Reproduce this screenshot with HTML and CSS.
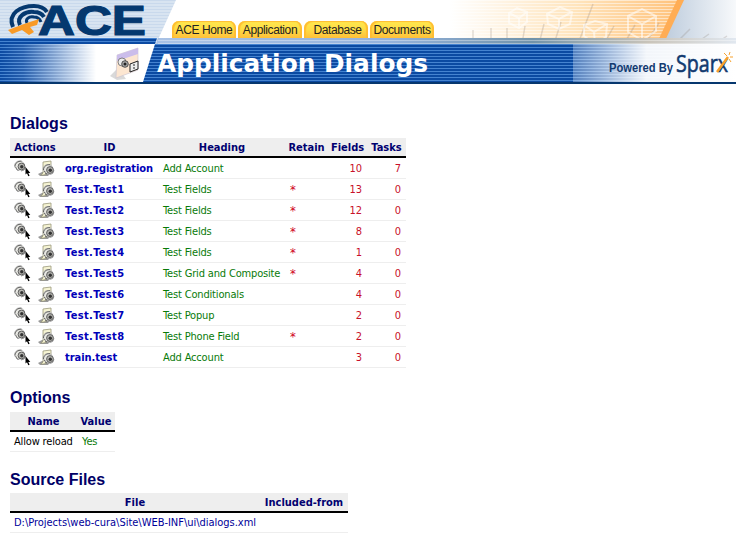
FILE: index.html
```
<!DOCTYPE html>
<html lang="en">
<head>
<meta charset="utf-8">
<title>Application Dialogs</title>
<link rel="stylesheet" href="styles.css">
</head>
<body>
<svg class="sprites" width="0" height="0" aria-hidden="true">
  <defs>
    <g id="eye">
      <ellipse cx="5.5" cy="5.5" rx="4.8" ry="4.6" fill="#e8e8e3" stroke="#aaa" stroke-width=".8"/>
      <path d="M1 6.5C1 3 4 1 7.500 1.200M3 8.500l-1.500-1M4.500 10.500l-2-1" fill="none" stroke="#444" stroke-width=".8"/>
      <circle cx="7.5" cy="6.5" r="3.4" fill="#b5b5b0" stroke="#555" stroke-width=".9"/>
      <circle cx="7.8" cy="6.800" r="1.700" fill="#333"/>
      <path d="M7 11q4 0 4.500-4" fill="none" stroke="#777" stroke-width=".8"/>
    </g>
    <symbol id="view" viewBox="0 0 17 17">
      <use href="#eye"/>
      <path d="M11.500 7v7.500l1.500-1.200 1.300 3 1.300-.6-1.300-2.700h2z" fill="#000"/>
    </symbol>
    <symbol id="source" viewBox="0 0 17 17">
      <path d="M0 14l4-2h9l-3 4H2z" fill="#999"/>
      <path d="M5 2l8-1v11l-7 3H3l2-2z" fill="#f6f4d3" stroke="#99987a" stroke-width=".8"/>
      <use href="#eye" transform="translate(4.500 3.500)"/>
    </symbol>
  </defs>
</svg>
<header class="banner">
  <svg class="art" width="736" height="84" viewBox="0 0 736 84">
    <defs>
      <pattern id="pale" width="4" height="3" patternUnits="userSpaceOnUse"><path fill="#d8e4f1" d="M0 0h4v3H0z"/><path fill="#c9d9ec" d="M0 0h4v1H0z"/></pattern>
      <pattern id="blue" width="4" height="3" y="44" patternUnits="userSpaceOnUse"><path fill="#0b4aa2" d="M0 0h4v3H0z"/><path fill="#4583d0" d="M0 0h4v1H0z"/></pattern>
      <pattern id="lines" width="4" height="3" patternUnits="userSpaceOnUse"><path fill="#fff" fill-opacity=".5" d="M0 0h4v1H0z"/></pattern>
      <linearGradient id="fadeIcon"><stop offset="0" stop-color="#fff" stop-opacity="0"/><stop offset=".15" stop-color="#fff" stop-opacity=".12"/><stop offset=".62" stop-color="#fff"/></linearGradient>
      <linearGradient id="fadePower"><stop offset="0" stop-color="#fff" stop-opacity=".3"/><stop offset=".45" stop-color="#fff" stop-opacity=".95"/><stop offset="1" stop-color="#fff"/></linearGradient>
      <linearGradient id="orange"><stop offset="0" stop-color="#fff"/><stop offset=".55" stop-color="#ffe4bc"/><stop offset="1" stop-color="#ffc27b"/></linearGradient>
      <linearGradient id="steel"><stop offset="0" stop-color="#bccbdc"/><stop offset="1" stop-color="#f7f9fb"/></linearGradient>
      <linearGradient id="edge"><stop offset="0" stop-color="#a9c2e5"/><stop offset=".4" stop-color="#94b2dc"/><stop offset=".65" stop-color="#7193aa"/><stop offset=".85" stop-color="#c9c4ba"/><stop offset="1" stop-color="#e1e8f0"/></linearGradient>
    </defs>
    <path fill="#fff" d="M0 0h736v84H0z"/>
    <path fill="url(#pale)" d="M0 0h176l-20 44H0z"/>
    <path fill="url(#orange)" d="M450 0h230v44H450z"/>
    <path fill="url(#lines)" d="M450 0h230v44H450z"/>
    <path fill="url(#steel)" d="M680 0h56v44h-74z"/>
    <path fill="#ffad55" d="M677 0h7l-20 43h-7z"/>
    <g fill="none" stroke="#8b8177" stroke-opacity=".25" stroke-width="1.500">
      <path d="M473 44V30M491 44V28M507 44V28M522 44l3-18M539 44l5-20M554 44l7-22M578 44l15-40M604 44l10-18M624 44l11-19M645 44l14-21M675 44l15-15M695 44l14-10M715 44l12-8"/>
    </g>
    <g fill="none" stroke="#fff" stroke-opacity=".55" stroke-width="2">
      <path d="M509 13l8-5 10 4v10l-8 6-10-5zM509 13l10 5 8-6M519 18v10"/>
      <path d="M547 14l13-7 12 5-2 12-11 5-11-5zM547 14l12 5 13-7M559 19v10"/>
      <path d="M584 25l11-4 12 3-1 13-11 7-11-8zM584 25l10 7 13-8M594 32l1 12"/>
      <path d="M628 16l14-7 14 7v15l-14 9-14-8zM628 16l14 8 14-8M642 24v16"/>
    </g>
    <path fill="url(#edge)" d="M158 38h578v6H156z"/>
    <path fill="#fff" fill-opacity=".35" d="M158 40h578v1H158zM158 43h578v1H158z"/>
    <path fill="url(#blue)" d="M0 38h157l-2 6v38H0z"/>
    <path fill="url(#fadeIcon)" d="M0 44h155v38H0z"/>
    <path fill="url(#blue)" d="M155 44h418v38H143z"/>
    <path fill="url(#blue)" d="M573 44h163v38H573z"/>
    <path fill="url(#fadePower)" d="M573 44h163v38H573z"/>
    <path fill="#06376e" d="M0 82h736v2H0z"/>
    <g fill="none" stroke="#04386f" stroke-width="4">
      <path d="M13 27C7 13 21 6 34 6q9 0 13 6"/>
      <path d="M20 25c-4-8 5-14 14-13q7 0 10 5"/>
      <path d="M27 23c-2-4 2-7 7-6q5 0 7 5" stroke-width="3"/>
    </g>
    <path d="M8 30l16-6 15-5-2 6-7 2 4 5-5 3-7-5-10 4z" fill="#f89a27"/>
    <text class="brand" x="38" y="35" textLength="108" lengthAdjust="spacingAndGlyphs">ACE</text>
    <path d="M110 76l8-8 8 11-9 1z" fill="#aaa" fill-opacity=".45"/>
    <path d="M117 55l21-7v22l-22 8z" fill="#fce6d1" stroke="#c7c1d0" stroke-width=".6"/>
    <path d="M117 55l21-7v6l-21 7z" fill="#cbbdeb"/>
    <circle cx="122" cy="62" r="4" fill="#eee" stroke="#555" stroke-width=".7"/>
    <circle cx="125" cy="64" r="3.300" fill="#aaa" stroke="#333" stroke-width=".8"/>
    <circle cx="125" cy="64" r="1.500" fill="#222"/>
    <path d="M130 64l8-3v8l-8 3z" fill="#eee" stroke="#222"/>
    <path d="M133 65h2M133 68h2" stroke="#222"/>
    <text class="title" x="157" y="72" textLength="271" lengthAdjust="spacingAndGlyphs">Application Dialogs</text>
    <text class="powered" x="609" y="72" textLength="64" lengthAdjust="spacingAndGlyphs">Powered By</text>
    <text class="sparx" x="676" y="72" textLength="52" lengthAdjust="spacingAndGlyphs">Sparx</text>
    <path d="M717 72l11-15" stroke="#f7a12c" stroke-width="2.500"/>
    <path d="M727 56l-3-3M729 55l1-3M730 57h3M729 59l2 3" stroke="#f7a12c"/>
  </svg>
  <nav class="tabs">
    <a>ACE Home</a><a>Application</a><a class="pad">Database</a><a>Documents</a>
  </nav>
</header>
<main>
  <h2>Dialogs</h2>
  <table class="dialogs">
    <colgroup><col class="c-act"><col class="c-id"><col class="c-head"><col class="c-ret"><col class="c-num"><col class="c-num"></colgroup>
    <thead><tr><th>Actions</th><th>ID</th><th>Heading</th><th>Retain</th><th>Fields</th><th>Tasks</th></tr></thead>
    <tbody>
      <tr><td class="act"><svg><use href="#view"/></svg><svg><use href="#source"/></svg></td><td class="id">org.registration</td><td>Add Account</td><td class="ret"></td><td class="num">10</td><td class="num">7</td></tr>
      <tr><td class="act"><svg><use href="#view"/></svg><svg><use href="#source"/></svg></td><td class="id test">Test.Test1</td><td>Test Fields</td><td class="ret">*</td><td class="num">13</td><td class="num">0</td></tr>
      <tr><td class="act"><svg><use href="#view"/></svg><svg><use href="#source"/></svg></td><td class="id test">Test.Test2</td><td>Test Fields</td><td class="ret">*</td><td class="num">12</td><td class="num">0</td></tr>
      <tr><td class="act"><svg><use href="#view"/></svg><svg><use href="#source"/></svg></td><td class="id test">Test.Test3</td><td>Test Fields</td><td class="ret">*</td><td class="num">8</td><td class="num">0</td></tr>
      <tr><td class="act"><svg><use href="#view"/></svg><svg><use href="#source"/></svg></td><td class="id test">Test.Test4</td><td>Test Fields</td><td class="ret">*</td><td class="num">1</td><td class="num">0</td></tr>
      <tr><td class="act"><svg><use href="#view"/></svg><svg><use href="#source"/></svg></td><td class="id test">Test.Test5</td><td>Test Grid and Composite</td><td class="ret">*</td><td class="num">4</td><td class="num">0</td></tr>
      <tr><td class="act"><svg><use href="#view"/></svg><svg><use href="#source"/></svg></td><td class="id test">Test.Test6</td><td>Test Conditionals</td><td class="ret"></td><td class="num">4</td><td class="num">0</td></tr>
      <tr><td class="act"><svg><use href="#view"/></svg><svg><use href="#source"/></svg></td><td class="id test">Test.Test7</td><td>Test Popup</td><td class="ret"></td><td class="num">2</td><td class="num">0</td></tr>
      <tr><td class="act"><svg><use href="#view"/></svg><svg><use href="#source"/></svg></td><td class="id test">Test.Test8</td><td>Test Phone Field</td><td class="ret">*</td><td class="num">2</td><td class="num">0</td></tr>
      <tr><td class="act"><svg><use href="#view"/></svg><svg><use href="#source"/></svg></td><td class="id">train.test</td><td>Add Account</td><td class="ret"></td><td class="num">3</td><td class="num">0</td></tr>
    </tbody>
  </table>
  <h2>Options</h2>
  <table class="options">
    <colgroup><col class="c-name"><col class="c-value"></colgroup>
    <thead><tr><th>Name</th><th>Value</th></tr></thead>
    <tbody><tr><td class="name">Allow reload</td><td class="value">Yes</td></tr></tbody>
  </table>
  <h2 class="files-title">Source Files</h2>
  <table class="files">
    <colgroup><col class="c-file"><col class="c-inc"></colgroup>
    <thead><tr><th>File</th><th>Included-from</th></tr></thead>
    <tbody><tr><td class="file">D:\Projects\web-cura\Site\WEB-INF\ui\dialogs.xml</td><td></td></tr></tbody>
  </table>
</main>
</body>
</html>
```
FILE: styles.css
```
body { margin: 0; background: #fff; font: 11px/13px "DejaVu Sans Condensed", "DejaVu Sans", sans-serif; font-stretch: condensed; overflow: hidden; }
.sprites { position: absolute; }
.banner { display: grid; height: 84px; }
.art, .tabs { grid-area: 1 / 1; }
.art { display: block; }
.brand { font: bold 42px "Liberation Sans", sans-serif; fill: #04386f; stroke: #04386f; stroke-width: 1.2px; }
.title { font: bold 24px "DejaVu Sans", sans-serif; fill: #fff; }
.powered { font: bold 13px "Liberation Sans", sans-serif; fill: #123a70; }
.sparx { font: 23px "Open Sans", sans-serif; fill: #123a70; stroke: #123a70; stroke-width: .6px; }
.tabs { z-index: 1; display: flex; gap: 2px; align-self: start; padding: 21px 0 0 172px; }
.tabs a { box-sizing: border-box; width: 64px; height: 17px; border-radius: 7px 7px 0 0; background: linear-gradient(#ffe94f, #ffdc45 50%, #ffc03a); box-shadow: inset 2px 1px 1px #ffbd32, inset -2px 0 1px #ffbd32; text-align: center; font: 12px/18px "Liberation Sans", sans-serif; letter-spacing: -.4px; color: #222; white-space: nowrap; }
.tabs .pad { padding-left: 3px; }
main { padding: 30px 10px 0; }
h2 { margin: 0 0 4px; height: 20px; font: bold 16px/20px "Liberation Sans", sans-serif; color: #000066; }
.files-title { margin-bottom: 3px; }
table { border-collapse: separate; border-spacing: 0; table-layout: fixed; margin-bottom: 20px; }
th, td { padding: 0 4px; white-space: nowrap; }
th { height: 18px; background: #eee; border-bottom: 2px solid #000; color: #000070; font-weight: bold; padding: 0; }
td { height: 20px; border-bottom: 1px solid #eee; color: #087a08; letter-spacing: -.16px; }
.dialogs { width: 396px; }
.c-act { width: 50px; } .c-id { width: 99px; } .c-head { width: 126px; } .c-ret { width: 43px; } .c-num { width: 39px; }
.options { width: 105px; margin-bottom: 18px; } .c-name { width: 67px; } .c-value { width: 38px; }
.files { width: 338px; } .c-file { width: 250px; } .c-inc { width: 88px; }
.options td, .files td { height: 19px; }
.act { font-size: 0; line-height: 0; }
.act svg { width: 17px; height: 17px; margin-right: 7px; vertical-align: middle; }
.act svg + svg { margin-right: 0; }
td.id { font-weight: bold; color: #0000b8; padding-left: 5px; letter-spacing: -.04px; }
td.test { letter-spacing: .35px; }
td.ret { padding-left: 5px; color: #d00020; font-size: 13px; }
td.num { text-align: right; padding-right: 5px; color: #c8102a; letter-spacing: 0; }
td.name { color: #000; }
td.value { padding-left: 5px; }
td.file { color: #000099; letter-spacing: -.02px; }
```
